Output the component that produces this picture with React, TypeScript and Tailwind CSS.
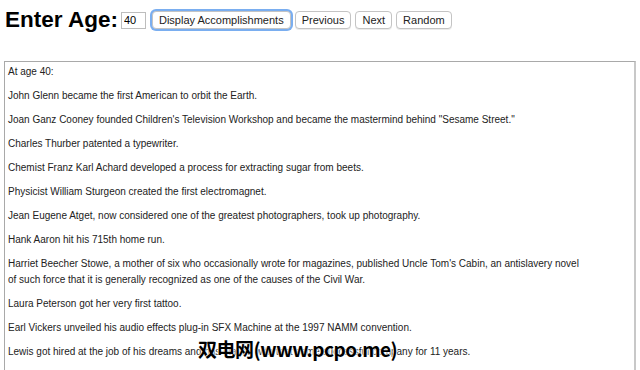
import React, { useState } from 'react';

const facts: string[] = [
  'John Glenn became the first American to orbit the Earth.',
  'Joan Ganz Cooney founded Children\'s Television Workshop and became the mastermind behind "Sesame Street."',
  'Charles Thurber patented a typewriter.',
  'Chemist Franz Karl Achard developed a process for extracting sugar from beets.',
  'Physicist William Sturgeon created the first electromagnet.',
  'Jean Eugene Atget, now considered one of the greatest photographers, took up photography.',
  'Hank Aaron hit his 715th home run.',
  "Harriet Beecher Stowe, a mother of six who occasionally wrote for magazines, published Uncle Tom's Cabin, an antislavery novel of such force that it is generally recognized as one of the causes of the Civil War.",
  'Laura Peterson got her very first tattoo.',
  'Earl Vickers unveiled his audio effects plug-in SFX Machine at the 1997 NAMM convention.',
  'Lewis got hired at the job of his dreams and has stayed with that same successful company for 11 years.',
];

const btn =
  'h-[18px] px-[6px] text-[11px] leading-none text-[#222] bg-white border border-[#c4c4c4] rounded-[4px] shadow-[0_1px_0_rgba(0,0,0,0.08)]';

export default function App() {
  const [age, setAge] = useState('40');

  return (
    <div className="relative w-[640px] h-[370px] overflow-hidden bg-white font-['Liberation_Sans',Arial,sans-serif] text-black">
      <div className="flex items-center h-[40px] pl-[5px]">
        <h1 className="text-[22.5px] font-bold leading-none mr-[3px]">Enter Age:</h1>
        <input
          value={age}
          onChange={(e) => setAge(e.target.value)}
          className="w-[25px] h-[17px] px-[2px] text-[11px] border border-[#bdbdbd] outline-none mr-[6px]"
        />
        <div className="flex gap-[4px]">
          <button className={`${btn} ring-[2px] ring-[#7aaef0] border-[#8fb6ea]`}>Display Accomplishments</button>
          <button className={btn}>Previous</button>
          <button className={btn}>Next</button>
          <button className={btn}>Random</button>
        </div>
      </div>

      <div className="mt-[21px] mx-[4px] h-[330px] border border-[#a9a9a9] border-r-2 border-r-[#c8c8c8] pl-[3px] pr-[45px] pt-[2px] text-[10px] leading-4 text-[#222]">
        <p className="mb-2">At age 40:</p>
        {facts.map((f, i) => (
          <p key={i} className="mb-2">
            {f}
          </p>
        ))}
      </div>

      <div className="absolute left-[198px] top-[339px] text-[19px] font-bold leading-none text-black tracking-tight font-['Noto_Sans_CJK_SC',sans-serif] [text-shadow:0_0_2px_#fff,0_0_2px_#fff,0_0_2px_#fff]">
        双电网(www.pcpo.me)
      </div>
    </div>
  );
}
